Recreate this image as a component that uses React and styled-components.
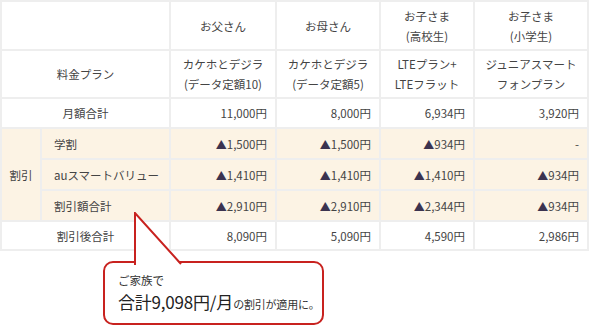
import React from 'react';
import styled, { createGlobalStyle } from 'styled-components';

const GlobalStyle = createGlobalStyle`
  body {
    margin: 0;
    background: #ffffff;
    font-family: "Noto Sans CJK JP", "Noto Sans", sans-serif;
    color: #444;
  }
`;

const Page = styled.div`
  width: 590px;
  height: 330px;
  overflow: hidden;
`;

const Table = styled.table`
  border-collapse: separate;
  border-spacing: 2px;
  background: #eeeeee;
  table-layout: fixed;
  width: 589px;
  font-size: 11.5px;
  line-height: 20px;
`;

const Cell = styled.td`
  background: ${(p) => (p.$beige ? '#fcf3e4' : '#ffffff')};
  text-align: ${(p) => p.$align || 'center'};
  padding: ${(p) => (p.$align === 'right' ? '0 8px 0 0' : p.$align === 'left' ? '0 0 0 12px' : '0')};
  height: ${(p) => p.$h || 28}px;
  vertical-align: middle;
  white-space: nowrap;
`;

const Mark = styled.span`
  color: #3b3350;
  font-size: 11px;
`;

const CalloutWrap = styled.div`
  position: relative;
  margin: 10px 0 0 103px;
  width: 221px;
`;

const CalloutBox = styled.div`
  position: relative;
  box-sizing: border-box;
  height: 64px;
  border: 2px solid #c8221f;
  border-radius: 10px;
  background: #fff;
  padding: 8px 0 0 13px;
  color: #333;
`;

const Tail = styled.svg`
  position: absolute;
  left: 31px;
  top: -49px;
  z-index: 2;
`;

const SmallLine = styled.div`
  font-size: 11.5px;
  line-height: 18px;
`;

const BigLine = styled.div`
  font-size: 17px;
  line-height: 25px;
  font-weight: 400;
  color: #222;
  letter-spacing: -0.2px;
`;

const Small = styled.span`
  font-size: 11px;
  color: #333;
`;

const Yen = ({ v, mark }) => (
  <>
    {mark && <Mark>▲</Mark>}
    {v}円
  </>
);

const members = [
  { name: ['お父さん'], plan: ['カケホとデジラ', '(データ定額10)'], monthly: '11,000', gak: '1,500', au: '1,410', sum: '2,910', after: '8,090' },
  { name: ['お母さん'], plan: ['カケホとデジラ', '(データ定額5)'], monthly: '8,000', gak: '1,500', au: '1,410', sum: '2,910', after: '5,090' },
  { name: ['お子さま', '(高校生)'], plan: ['LTEプラン+', 'LTEフラット'], monthly: '6,934', gak: '934', au: '1,410', sum: '2,344', after: '4,590' },
  { name: ['お子さま', '(小学生)'], plan: ['ジュニアスマート', 'フォンプラン'], monthly: '3,920', gak: null, au: '934', sum: '934', after: '2,986' },
];

const Lines = ({ lines }) => lines.map((l, i) => <div key={i}>{l}</div>);

export default function App() {
  return (
    <Page>
      <GlobalStyle />
      <Table>
        <colgroup>
          <col style={{ width: 38 }} />
          <col style={{ width: 127 }} />
          <col style={{ width: 104 }} />
          <col style={{ width: 102 }} />
          <col style={{ width: 92 }} />
          <col style={{ width: 112 }} />
        </colgroup>
        <tbody>
          <tr>
            <Cell colSpan={2} $h={47}></Cell>
            {members.map((m, i) => (
              <Cell key={i} $h={47}><Lines lines={m.name} /></Cell>
            ))}
          </tr>
          <tr>
            <Cell colSpan={2} $h={46}>料金プラン</Cell>
            {members.map((m, i) => (
              <Cell key={i} $h={46}><Lines lines={m.plan} /></Cell>
            ))}
          </tr>
          <tr>
            <Cell colSpan={2}>月額合計</Cell>
            {members.map((m, i) => (
              <Cell key={i} $align="right"><Yen v={m.monthly} /></Cell>
            ))}
          </tr>
          <tr>
            <Cell rowSpan={3} $beige>割引</Cell>
            <Cell $beige $align="left" $h={29}>学割</Cell>
            {members.map((m, i) => (
              <Cell key={i} $beige $align="right" $h={29}>{m.gak ? <Yen v={m.gak} mark /> : '-'}</Cell>
            ))}
          </tr>
          <tr>
            <Cell $beige $align="left" $h={29}>auスマートバリュー</Cell>
            {members.map((m, i) => (
              <Cell key={i} $beige $align="right" $h={29}><Yen v={m.au} mark /></Cell>
            ))}
          </tr>
          <tr>
            <Cell $beige $align="left" $h={29}>割引額合計</Cell>
            {members.map((m, i) => (
              <Cell key={i} $beige $align="right" $h={29}><Yen v={m.sum} mark /></Cell>
            ))}
          </tr>
          <tr>
            <Cell colSpan={2} $h={27}>割引後合計</Cell>
            {members.map((m, i) => (
              <Cell key={i} $align="right" $h={27}><Yen v={m.after} /></Cell>
            ))}
          </tr>
        </tbody>
      </Table>
      <CalloutWrap>
        <Tail width="50" height="53" viewBox="0 0 50 53">
          <polygon points="1,1 1,53 47,53" fill="#fff" />
          <polyline points="1,53 1,1 47,52" fill="none" stroke="#c8221f" strokeWidth="2" />
        </Tail>
        <CalloutBox>
          <SmallLine>ご家族で</SmallLine>
          <BigLine>合計9,098円/月<Small>の割引が適用に。</Small></BigLine>
        </CalloutBox>
      </CalloutWrap>
    </Page>
  );
}
